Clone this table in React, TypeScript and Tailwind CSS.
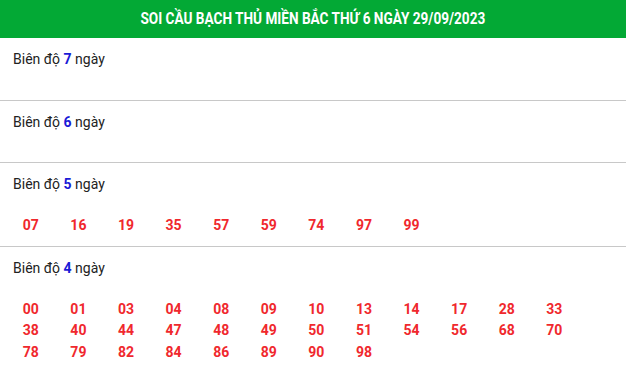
import React from "react";

const sections: { d: number; nums: string[] }[] = [
  { d: 7, nums: [] },
  { d: 6, nums: [] },
  { d: 5, nums: ["07", "16", "19", "35", "57", "59", "74", "97", "99"] },
  {
    d: 4,
    nums: [
      "00", "01", "03", "04", "08", "09", "10", "13", "14", "17", "28", "33",
      "38", "40", "44", "47", "48", "49", "50", "51", "54", "56", "68", "70",
      "78", "79", "82", "84", "86", "89", "90", "98",
    ],
  },
];

export default function App() {
  return (
    <div className="w-[626px] bg-white font-['Roboto',sans-serif] text-[#222]">
      <div className="h-[38px] bg-[#03a935] flex items-center justify-center overflow-hidden">
        <div className="text-white font-bold text-[16px] leading-[38px] whitespace-nowrap scale-x-[0.85]">
          SOI CẦU BẠCH THỦ MIỀN BẮC THỨ 6 NGÀY 29/09/2023
        </div>
      </div>
      {sections.map((s, i) => (
        <div
          key={s.d}
          className={`pt-[11px] ${i < sections.length - 1 ? "border-b border-[#c8c8c8]" : ""}`}
        >
          <div className="px-[13px] text-[14px] leading-[20px]">
            Biên độ <span className="text-[#1a1ad6] font-bold">{s.d}</span> ngày
          </div>
          <div className="mt-[20.5px] pb-[10px] pl-[7px] grid grid-cols-[repeat(12,47.6px)]">
            {s.nums.map((n) => (
              <div
                key={n}
                className="h-[21.5px] leading-[21.5px] text-center text-[14px] font-bold text-[#f0282d]"
              >
                {n}
              </div>
            ))}
          </div>
        </div>
      ))}
    </div>
  );
}
